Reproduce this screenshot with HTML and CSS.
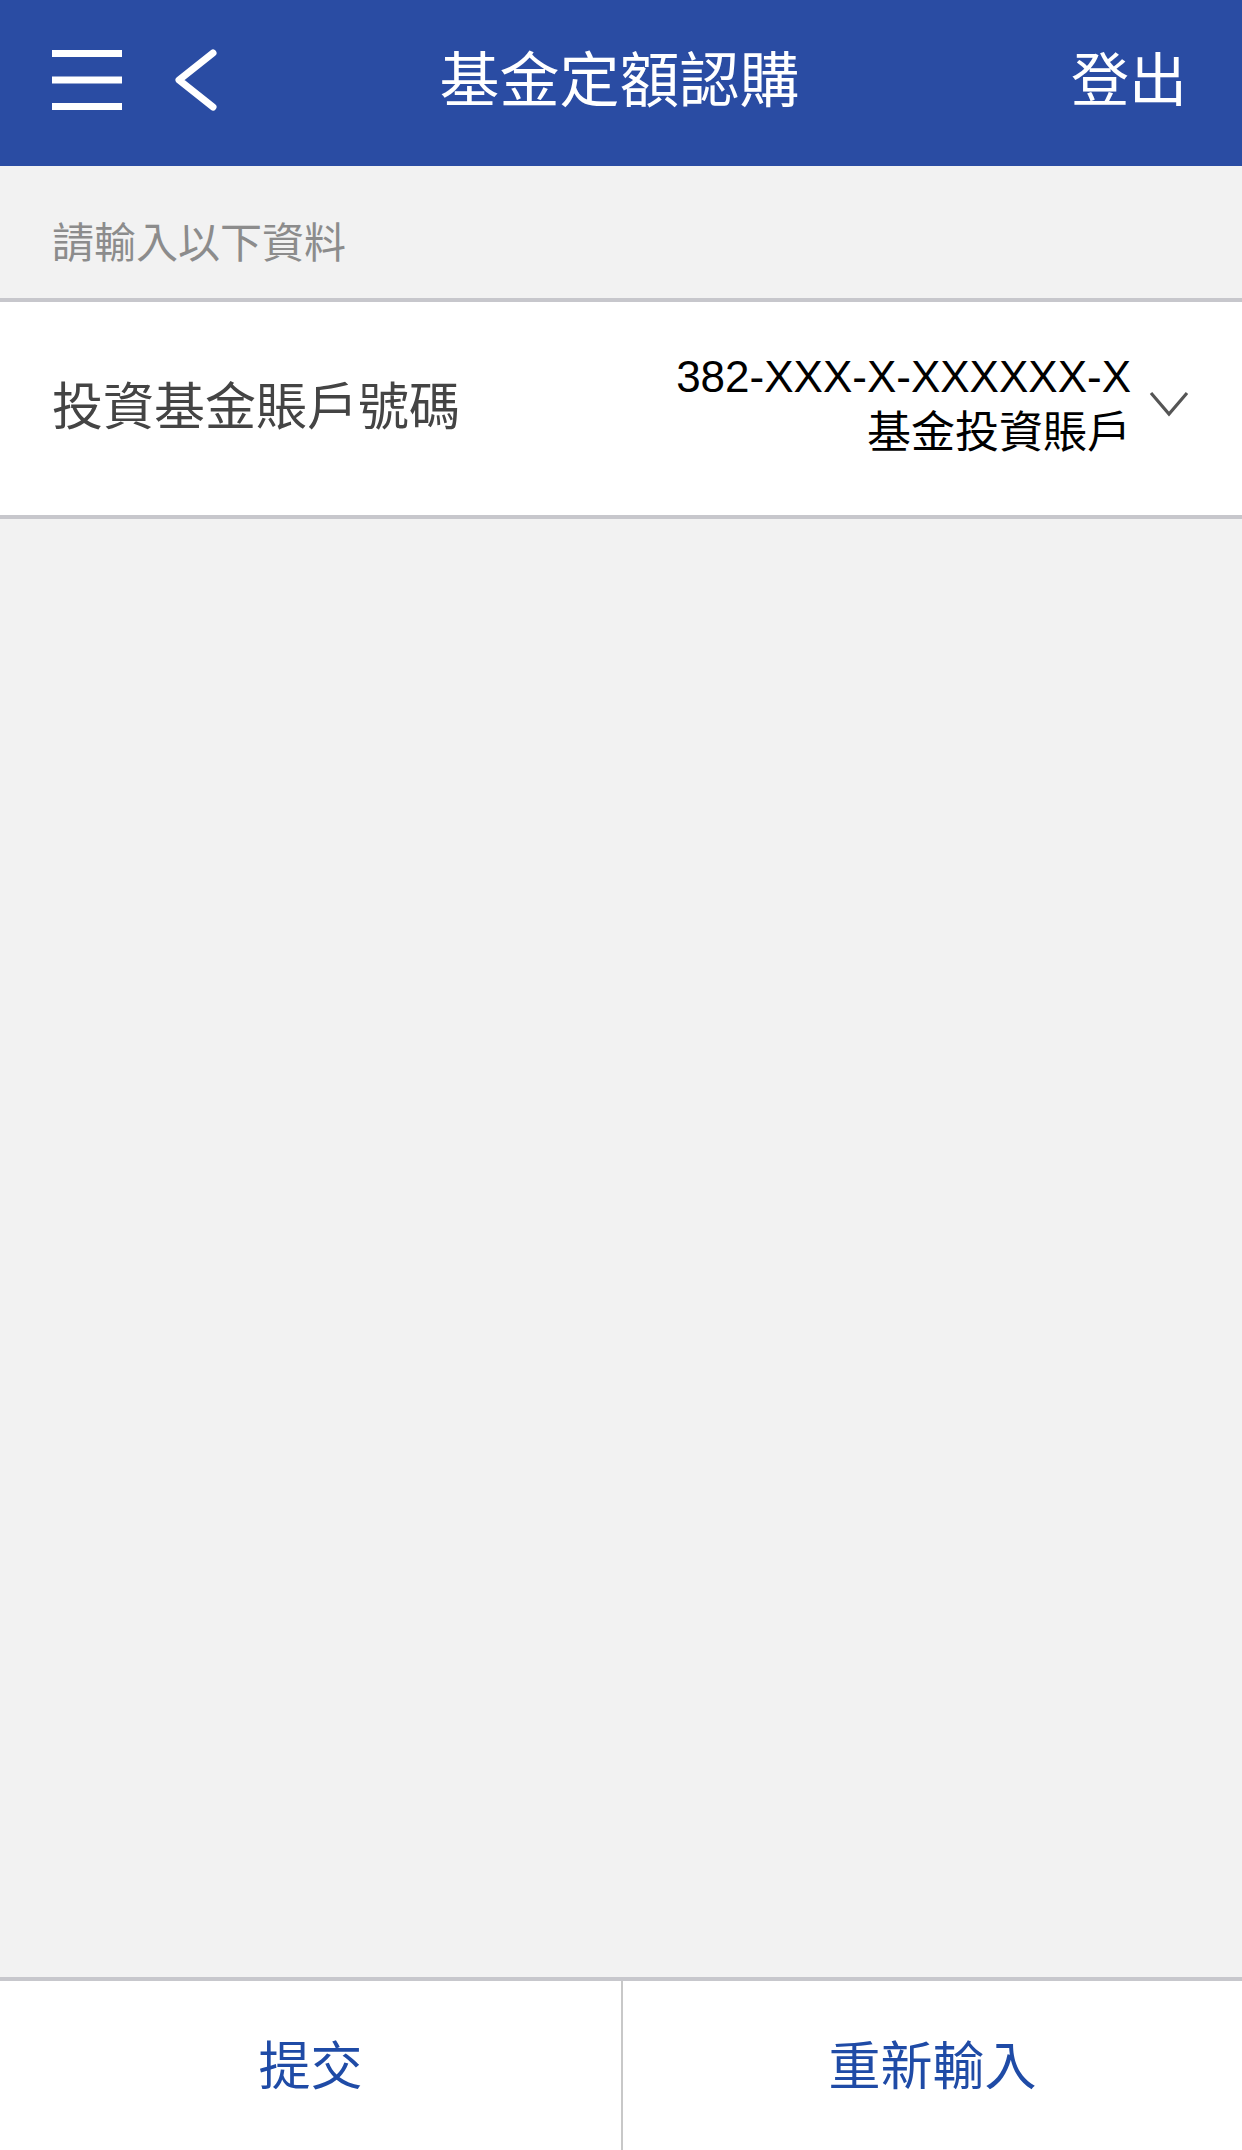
FILE: index.html
```html
<!DOCTYPE html>
<html lang="zh-Hant">
<head>
<meta charset="utf-8">
<title>基金定額認購</title>
<link rel="stylesheet" href="styles.css">
</head>
<body>
<div class="page">
  <header class="topbar">
    <div class="topbar-left">
      <svg class="icon-menu" width="70" height="60" viewBox="0 0 70 60">
        <rect x="0" y="0" width="70" height="7" fill="#fff"/>
        <rect x="0" y="26.5" width="70" height="7" fill="#fff"/>
        <rect x="0" y="53" width="70" height="7" fill="#fff"/>
      </svg>
      <svg class="icon-back" width="46" height="62" viewBox="0 0 46 62">
        <polyline points="40,4 6,31 40,58" fill="none" stroke="#fff" stroke-width="7" stroke-linecap="round" stroke-linejoin="round"/>
      </svg>
    </div>
    <h1 class="title">基金定額認購</h1>
    <div class="topbar-right">登出</div>
  </header>

  <div class="section-label">請輸入以下資料</div>

  <div class="field-row">
    <div class="field-name">投資基金賬戶號碼</div>
    <div class="field-value">
      <div class="value-text">
        <div class="acct-no">382-XXX-X-XXXXXX-X</div>
        <div class="acct-type">基金投資賬戶</div>
      </div>
      <svg class="icon-down" width="40" height="28" viewBox="0 0 40 28">
        <polyline points="2,3 20,24 38,3" fill="none" stroke="#555" stroke-width="3.2"/>
      </svg>
    </div>
  </div>

  <div class="spacer"></div>

  <footer class="actions">
    <div class="action">提交</div>
    <div class="action">重新輸入</div>
  </footer>
</div>
</body>
</html>
```

FILE: styles.css
```css
html, body {
  margin: 0;
  padding: 0;
}
body {
  font-family: "Noto Sans CJK TC", "Noto Sans", "Liberation Sans", sans-serif;
  background: #f2f2f2;
}
.page {
  height: 2150px;
  display: flex;
  flex-direction: column;
}
.topbar {
  height: 166px;
  box-sizing: border-box;
  padding: 0 55px 6px 52px;
  background: #2a4ca3;
  color: #fff;
  display: grid;
  grid-template-columns: 1fr auto 1fr;
  align-items: center;
  flex: none;
}
.topbar-left {
  display: flex;
  align-items: center;
  gap: 51px;
}
.icon-menu, .icon-back {
  display: block;
}
.title {
  margin: 0 0 9px;
  font-size: 60px;
  font-weight: 400;
  line-height: 1;
  letter-spacing: 0;
}
.topbar-right {
  justify-self: end;
  font-size: 58px;
  line-height: 1;
  margin-bottom: 9px;
}
.section-label {
  height: 136px;
  box-sizing: border-box;
  padding: 40px 52px 0;
  font-size: 42px;
  line-height: 1.6;
  color: #8c8c8c;
  border-bottom: 4px solid #c7c7cc;
  flex: none;
}
.field-row {
  height: 217px;
  box-sizing: border-box;
  background: #fff;
  border-bottom: 4px solid #c7c7cc;
  padding: 0 53px 10px 52px;
  display: flex;
  align-items: center;
  justify-content: space-between;
  flex: none;
}
.field-name {
  font-size: 51px;
  color: #444;
  line-height: 1;
}
.field-value {
  display: flex;
  align-items: center;
  gap: 18px;
}
.value-text {
  text-align: right;
  color: #000;
}
.acct-no {
  font-family: "Liberation Sans", Arial, sans-serif;
  font-size: 44px;
  letter-spacing: 0;
  line-height: 50px;
}
.acct-type {
  font-size: 44px;
  line-height: 54px;
}
.icon-down {
  display: block;
}
.spacer {
  flex: 1;
}
.actions {
  height: 173px;
  box-sizing: border-box;
  border-top: 4px solid #c7c7cc;
  background: #fff;
  display: grid;
  grid-template-columns: 1fr 1fr;
  flex: none;
}
.action {
  display: flex;
  align-items: center;
  justify-content: center;
  font-size: 52px;
  color: #1f4ba6;
  padding-bottom: 6px;
}
.action + .action {
  border-left: 2px solid #c8c8c8;
}
```
